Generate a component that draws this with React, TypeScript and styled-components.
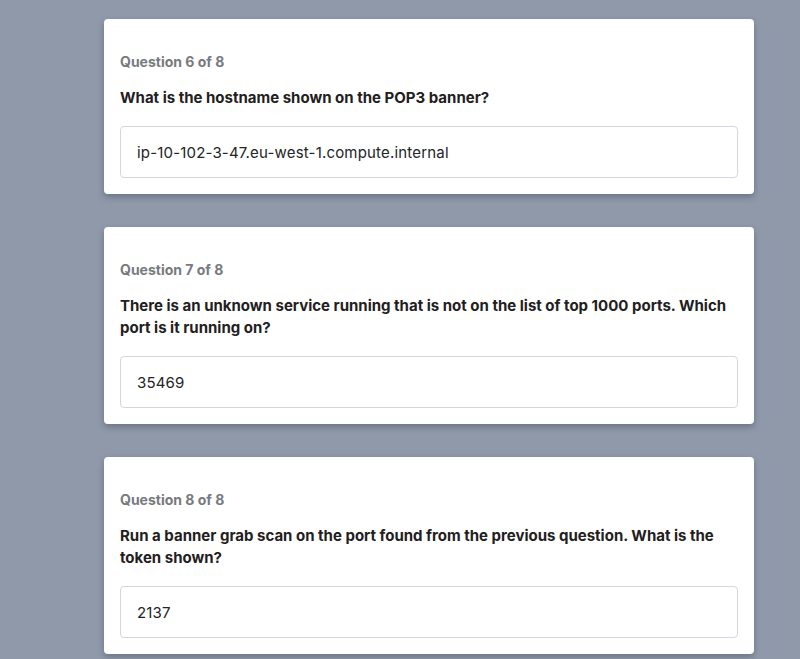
import React from "react";
import styled, { createGlobalStyle } from "styled-components";

const Global = createGlobalStyle`
  html, body { margin: 0; padding: 0; background: #8f99aa; }
  body { font-family: Inter, "Noto Sans", sans-serif; -webkit-font-smoothing: antialiased; }
  * { box-sizing: border-box; }
`;

const Page = styled.div`
  display: flex;
  flex-direction: column;
  gap: 33px;
  padding: 19px 46px 32px 104px;
  width: 800px;
`;

const Card = styled.section`
  background: #ffffff;
  border-radius: 4px;
  box-shadow: 0 3px 6px rgba(40, 48, 64, 0.35);
  padding: 33px 16px 16px;
  display: flex;
  flex-direction: column;
`;

const Label = styled.div`
  font-size: 14px;
  line-height: 20px;
  font-weight: 700;
  color: #777a7e;
  margin-bottom: 15px;
`;

const QuestionText = styled.div`
  font-size: 15px;
  line-height: 22px;
  font-weight: 700;
  color: #1f2020;
  margin-bottom: 17px;
`;

const Answer = styled.input`
  width: 100%;
  height: 52px;
  border: 1px solid #d3d6e0;
  border-radius: 4px;
  padding: 0 16px;
  font-family: Inter, "Noto Sans", sans-serif;
  font-size: 15px;
  letter-spacing: 0.18px;
  color: #222426;
  background: #fff;
  outline: none;
`;

const questions = [
  { n: 6, q: "What is the hostname shown on the POP3 banner?", a: "ip-10-102-3-47.eu-west-1.compute.internal" },
  { n: 7, q: "There is an unknown service running that is not on the list of top 1000 ports. Which port is it running on?", a: "35469" },
  { n: 8, q: "Run a banner grab scan on the port found from the previous question. What is the token shown?", a: "2137" },
];

export default function App() {
  return (
    <>
      <Global />
      <Page>
        {questions.map((item) => (
          <Card key={item.n}>
            <Label>Question {item.n} of 8</Label>
            <QuestionText>{item.q}</QuestionText>
            <Answer readOnly value={item.a} />
          </Card>
        ))}
      </Page>
    </>
  );
}
